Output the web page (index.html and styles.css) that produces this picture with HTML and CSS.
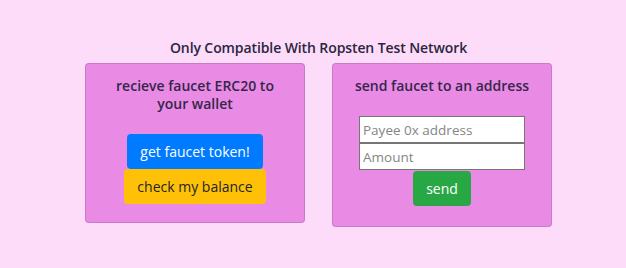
FILE: index.html
```html
<!DOCTYPE html>
<html lang="en">
<head>
    <meta charset="UTF-8">
    <meta name="viewport" content="width=device-width, initial-scale=1.0">
    <title>Faucet</title>
    <link rel="stylesheet" href="styles.css">
</head>
<body>
    <div id="faucet">
        <h5 class="title">Only Compatible With Ropsten Test Network</h5>

        <div class="cards">
            <div class="card card-receive">
                <h5 class="card-title">recieve faucet ERC20 to your wallet</h5>
                <button class="btn btn-primary">get faucet token!</button>
                <button class="btn btn-warning">check my balance</button>
            </div>

            <div class="card card-send">
                <h5 class="card-title">send faucet to an address</h5>
                <input class="field" type="text" placeholder="Payee 0x address">
                <input class="field" type="text" placeholder="Amount">
                <button class="btn btn-success">send</button>
            </div>
        </div>
    </div>
</body>
</html>
```

FILE: styles.css
```css
/* CSS */
body {
    font-family: "Segoe UI", "Open Sans", sans-serif;
    background-color: #fcdcf9;
    color: #212529;
    margin: 0;
    padding: 0;
}

#faucet {
    padding: 38px 0 0 11px;
    display: flex;
    flex-direction: column;
    align-items: center;
}

.title {
    font-size: 14px;
    font-weight: 600;
    line-height: 19px;
    letter-spacing: -0.1px;
    margin: 0 0 6px;
    color: #2b2540;
}

.cards {
    display: flex;
    align-items: flex-start;
    gap: 27px;
}

.card {
    width: 220px;
    box-sizing: border-box;
    background-color: #e98ae5;
    border: 1px solid rgba(0, 0, 0, 0.125);
    border-radius: 4px;
    display: flex;
    flex-direction: column;
    align-items: center;
    padding: 13px 20px 18px;
}

.card-send {
    padding-bottom: 20px;
}

.card-title {
    font-size: 14px;
    font-weight: 600;
    line-height: 18px;
    text-align: center;
    margin: 0 0 21px;
    color: #35264a;
}

.btn {
    font-family: inherit;
    font-size: 14px;
    line-height: 21px;
    padding: 6px 12px;
    border: 1px solid transparent;
    border-radius: 4px;
    cursor: pointer;
}

.btn-primary {
    background-color: #007bff;
    color: #fff;
}

.btn-warning {
    background-color: #ffc107;
    color: #212529;
}

.btn-success {
    background-color: #28a745;
    color: #fff;
    margin-top: 1px;
}

.field {
    width: 166px;
    height: 27px;
    box-sizing: border-box;
    font-family: inherit;
    font-size: 13.5px;
    padding: 1px 3px;
    border: 1px solid #767676;
    background: #fff;
    margin: 0;
}

.field::placeholder {
    color: #858585;
}
```
